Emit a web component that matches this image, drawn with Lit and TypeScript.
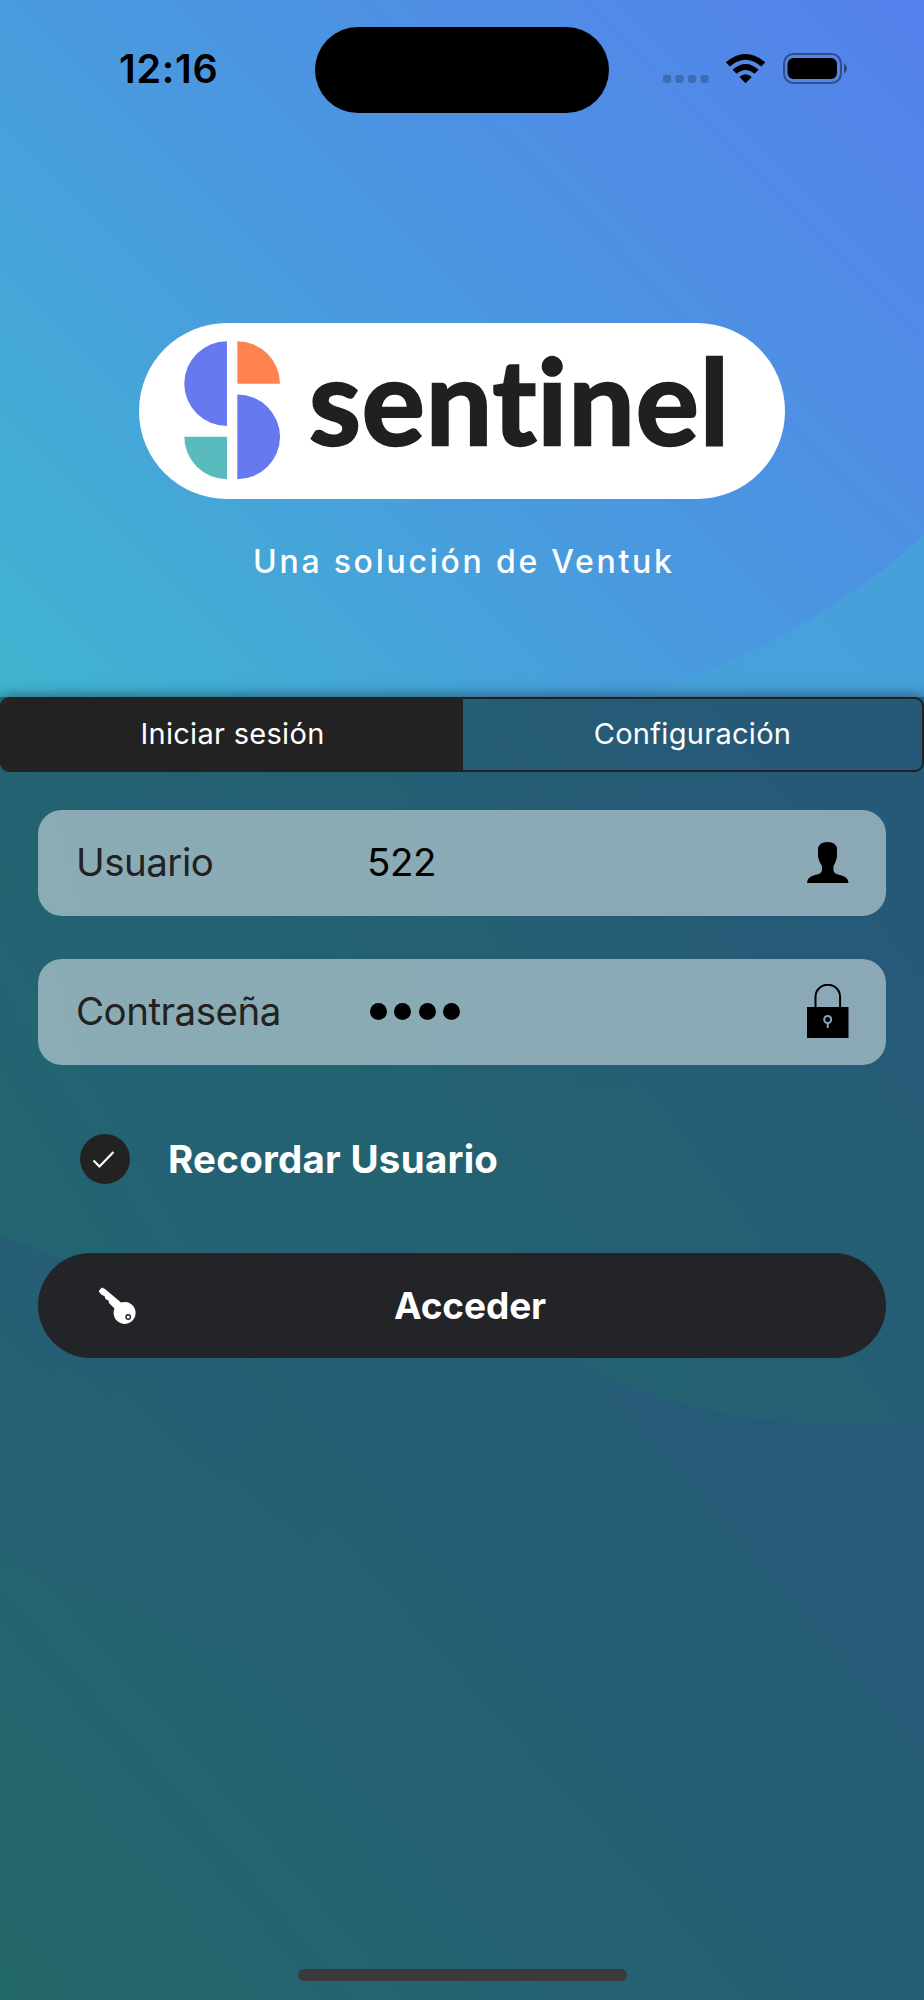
import { LitElement, html, css, svg } from "lit";
import { customElement, property } from "lit/decorators.js";

@customElement("status-bar")
class StatusBar extends LitElement {
  static styles = css`
    :host { display: grid; grid-template-columns: 315px 294px 315px; height: 140px; padding-top: 27px; box-sizing: border-box; }
    .time { padding: 18px 0 0 119px; font: 600 39.5px/48px Inter, sans-serif; letter-spacing: 0.7px; color: #000; }
    .island { height: 86px; border-radius: 43px; background: #000; }
    .icons { padding-left: 47px; }
    svg { display: block; }
  `;
  render() {
    return html`
      <div class="time">12:16</div>
      <div class="island"></div>
      <div class="icons">
        <svg width="200" height="86" viewBox="656 27 200 86">
          <g fill="#000" fill-opacity=".22">
            ${[663, 675.4, 688, 700.4].map((x) => svg`<rect x=${x} y="75" width="8.2" height="8" rx="2.4"/>`)}
          </g>
          <path d="M725.8 62.3 Q745.5 45.7 765.3 62.3 L761.3 66.4 Q745.5 53.2 729.8 66.4Z
                   M732.6 69.7 Q745.5 58.2 758.5 69.7 L754.6 73.8 Q745.5 66.2 736.5 73.8Z
                   M739.4 77 Q745.5 71.6 751.8 77 L745.5 83.3Z"/>
          <rect x="784" y="54" width="57" height="29" rx="9.5" fill="none" stroke="#000" stroke-opacity=".42" stroke-width="2"/>
          <rect x="787.5" y="58" width="49.5" height="21" rx="6"/>
          <path d="M844 63.7Q847 65 847 68.5T844 73.4Z" fill-opacity=".45"/>
        </svg>
      </div>`;
  }
}

@customElement("brand-header")
class BrandHeader extends LitElement {
  static styles = css`
    :host { display: flex; flex-direction: column; align-items: center; padding-top: 183px; height: 557px; box-sizing: border-box; }
    .logo { width: 646px; height: 176px; border-radius: 88px; background: #fff; overflow: hidden; }
    svg { display: block; }
    .word { font: 700 118px Lato, sans-serif; font-variant-ligatures: none; fill: #202020; stroke: #202020; stroke-width: 2.4px; }
    .claim { margin-top: 42px; font: 500 32px/40px Inter, sans-serif; fill: #fff; }
  `;
  render() {
    return html`
      <div class="logo">
        <svg width="646" height="176" viewBox="139 323 646 176">
          <path fill="#6779ef" d="M227 341.300a42.700 42.300 0 0 0 0 84.700ZM237.300 394.500a42.700 42.300 0 0 1 0 84.700Z"/>
          <path fill="#ff834d" d="M237.300 341.300a42.600 42.500 0 0 1 42.700 42.500H237.300Z"/>
          <path fill="#5abbbe" d="M227 479.200a42.600 42.500 0 0 1 -42.700 -42.500H227Z"/>
          <text class="word" x="309" y="445" textLength="420">sentinel</text>
        </svg>
      </div>
      <svg class="claim" width="430" height="44" viewBox="247 540 430 44">
        <text x="253" y="571.500" textLength="419">Una solución de Ventuk</text>
      </svg>`;
  }
}

@customElement("login-field")
class LoginField extends LitElement {
  @property() label = "";
  @property() value = "";
  @property({ type: Number }) masked = 0;
  static styles = css`
    :host { display: flex; align-items: center; height: 106px; padding: 0 37px 0 38px; border-radius: 24px; box-sizing: border-box;
      background: linear-gradient(75deg, #8aacb4, #8ba8b6); font: 400 38.5px/48px Inter, sans-serif; }
    .label { width: 291px; margin-top: -2px; color: #222; letter-spacing: -0.5px; }
    .value { flex: 1; display: flex; gap: 7.3px; margin-top: -2px; color: #000; letter-spacing: -0.4px; }
    .dot { width: 17px; height: 17px; margin-left: 3px; margin-right: -3px; border-radius: 50%; background: #000; }
  `;
  render() {
    return html`
      <div class="label">${this.label}</div>
      <div class="value">${this.masked ? Array.from({ length: this.masked }, () => html`<span class="dot"></span>`) : this.value}</div>
      <slot></slot>`;
  }
}

@customElement("app-root")
class AppRoot extends LitElement {
  static styles = css`
    :host { display: block; width: 924px; height: 2000px; position: relative; overflow: hidden; }
    .backdrop { position: absolute; inset: 0; }
    .page { position: relative; display: flex; flex-direction: column; height: 2000px; }
    .panel { flex: 1; display: flex; flex-direction: column; box-shadow: 0 0 14px rgba(0, 0, 0, 0.55); clip-path: inset(-20px 0 0 0); }
    .tabs { display: grid; grid-template-columns: 461px 1fr; height: 75px; box-sizing: border-box; border: 2.5px solid #222; border-radius: 9px; overflow: hidden;
      font: 400 29px/69px Inter, sans-serif; letter-spacing: 0.3px; color: #fff; text-align: center; }
    .tab.on { background: #222; }
    .form { flex: 1; display: flex; flex-direction: column; padding: 38px 38px 0; }
    .second { margin-top: 43px; }
    .remember { display: flex; align-items: center; gap: 38px; height: 50px; margin: 69px 0 69px 42px; font: 700 38.5px/50px Inter, sans-serif; color: #fff; letter-spacing: 0.25px; }
    .submit { display: grid; grid-template-columns: 60px 1fr 44px; align-items: center; height: 105px; box-sizing: border-box; padding: 0 56px; border: 0; border-radius: 53px; background: #232428;
      font: 700 37px/50px Inter, sans-serif; letter-spacing: -0.1px; color: #fff; }
    .home { align-self: center; width: 329px; height: 12px; margin-bottom: 19px; border-radius: 6px; background: #3a393b; }
    svg { display: block; flex: none; }
  `;
  render() {
    return html`
      <svg class="backdrop" width="924" height="2000" viewBox="0 0 924 2000">
        <defs>
          <linearGradient id="sky" gradientUnits="userSpaceOnUse" x1="60" y1="800" x2="900" y2="-40">
            <stop offset="0" stop-color="#3fb7d0"/><stop offset=".5" stop-color="#4a98df"/><stop offset="1" stop-color="#5580ec"/>
          </linearGradient>
          <linearGradient id="wave" gradientUnits="userSpaceOnUse" x1="560" y1="760" x2="924" y2="500">
            <stop offset="0" stop-color="#45a3da"/><stop offset="1" stop-color="#489fdb"/>
          </linearGradient>
          <linearGradient id="deep" gradientUnits="userSpaceOnUse" x1="0" y1="1980" x2="790" y2="1300">
            <stop offset="0" stop-color="#23686b"/><stop offset=".5" stop-color="#255f73"/><stop offset="1" stop-color="#265a78"/>
          </linearGradient>
          <linearGradient id="mid" gradientUnits="userSpaceOnUse" x1="420" y1="1260" x2="900" y2="900">
            <stop offset="0" stop-color="#236371"/><stop offset="1" stop-color="#265a77"/>
          </linearGradient>
          <linearGradient id="low" gradientUnits="userSpaceOnUse" x1="0" y1="1200" x2="400" y2="960">
            <stop offset="0" stop-color="#236571"/><stop offset="1" stop-color="#255e75"/>
          </linearGradient>
          <linearGradient id="upper" gradientUnits="userSpaceOnUse" x1="20" y1="900" x2="620" y2="560">
            <stop offset="0" stop-color="#236570"/><stop offset=".6" stop-color="#255e74"/><stop offset="1" stop-color="#265978"/>
          </linearGradient>
          <linearGradient id="fade" gradientUnits="userSpaceOnUse" x1="0" y1="1235" x2="380" y2="1600">
            <stop offset="0" stop-color="#265b78" stop-opacity=".8"/><stop offset="1" stop-color="#265b78" stop-opacity="0"/>
          </linearGradient>
        </defs>
        <rect width="924" height="697" fill="url(#sky)"/>
        <path d="M924 535Q800 648 630 697H924Z" fill="url(#wave)"/>
        <rect y="697" width="924" height="1303" fill="url(#deep)"/>
        <path d="M0 1235Q330 1370 630 1785L0 1560Z" fill="url(#fade)" opacity=".5"/>
        <path d="M0 697H924V1422Q700 1440 560 1350L250 1360Q130 1280 0 1235Z" fill="url(#low)"/>
        <path d="M200 697H924V1422Q700 1440 560 1350Q400 1270 230 1040Z" fill="url(#mid)"/>
        <path d="M0 697H924V1040L300 1130Q170 960 0 895Z" fill="url(#upper)" opacity=".55"/>
      </svg>
      <div class="page">
        <status-bar></status-bar>
        <brand-header></brand-header>
        <div class="panel">
          <div class="tabs"><div class="tab on">Iniciar sesión</div><div class="tab">Configuración</div></div>
          <div class="form">
            <login-field label="Usuario" value="522">
              <svg width="42" height="42" viewBox="807 842 42 42"><path d="M807 883Q807 877 815 875Q822 874 822 870V866Q818 860 818 855V850Q818 842 827.500 842T837 850V855Q837 860 833.500 866V870Q833.500 874 840 875Q848.500 877 848.500 883Z"/></svg>
            </login-field>
            <login-field class="second" label="Contraseña" masked="4">
              <svg width="42" height="56" viewBox="807 984 42 56"><path d="M815.500 1008V997a12.300 12.300 0 0 1 24.600 0v11" fill="none" stroke="#000" stroke-width="2"/><path d="M807 1007h41.500v31H807Z"/><g fill="none" stroke="#8ba9b5" stroke-width="2"><circle cx="827.700" cy="1019.500" r="3.500"/><path d="M827.700 1022v6"/></g></svg>
            </login-field>
            <div class="remember">
              <svg width="50" height="50" viewBox="80 1134 50 50"><circle cx="105" cy="1159" r="25" fill="#222"/><path d="M93.500 1160.500l6 6L113.500 1152" fill="none" stroke="#fff" stroke-width="2.200"/></svg>
              <span>Recordar Usuario</span>
            </div>
            <button class="submit">
              <svg width="44" height="40" viewBox="94 1285 44 40"><path fill="#fff" d="M99 1289.500L102 1286.500L105 1288L121 1301.500A11 11 0 1 1 114.500 1307.500L109 1302L108.500 1299.500L105.500 1298L104.500 1295Q101 1294 99 1291Z"/><circle cx="128.200" cy="1316" r="2.200" fill="#fff" stroke="#232428" stroke-width="1.400"/></svg>
              <span>Acceder</span><span></span>
            </button>
          </div>
          <div class="home"></div>
        </div>
      </div>`;
  }
}
